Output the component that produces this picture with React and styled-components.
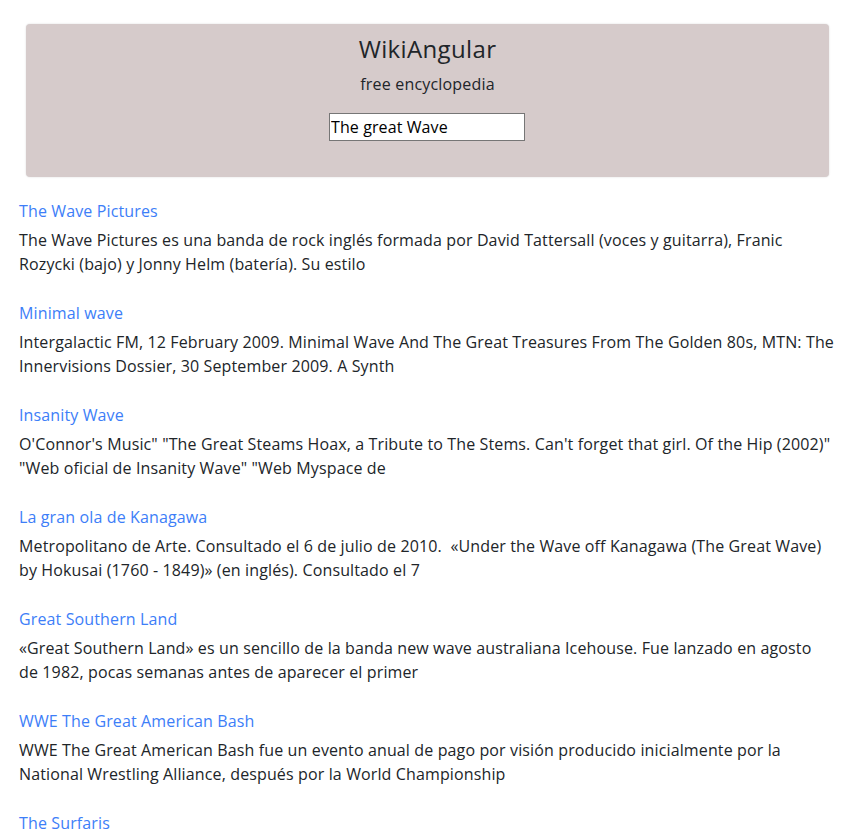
import React from 'react';
import styled, { createGlobalStyle } from 'styled-components';

const GlobalStyle = createGlobalStyle`
  body {
    margin: 0;
    font-family: "Open Sans", "Liberation Sans", sans-serif;
    color: #212529;
    background: #fff;
  }
`;

const Page = styled.div`
  padding: 24px 9px 0 19px;
`;

const Header = styled.header`
  margin: 0 5px 0 7px;
  height: 153px;
  box-sizing: border-box;
  padding-top: 10px;
  background-color: #d6cbcb;
  border-radius: 4px;
  box-shadow: 0 0 2px rgba(0, 0, 0, 0.15);
  display: flex;
  flex-direction: column;
  align-items: center;
`;

const Title = styled.h1`
  margin: 0;
  font-size: 24px;
  font-weight: 400;
  line-height: 30px;
  letter-spacing: 0.35px;
`;

const Subtitle = styled.p`
  margin: 8px 0 0;
  font-size: 16px;
  line-height: 24px;
  letter-spacing: 0.18px;
`;

const SearchInput = styled.input`
  margin-top: 17px;
  margin-right: 1px;
  width: 196px;
  height: 28px;
  box-sizing: border-box;
  padding: 1px 1px;
  font-family: "Open Sans", "Liberation Sans", sans-serif;
  font-size: 16px;
  letter-spacing: 0.1px;
  color: #000;
  border: 1px solid #767676;
  border-radius: 0;
  background: #fff;
  outline: none;
`;

const Results = styled.ul`
  list-style: none;
  margin: 22px 0 0;
  padding: 0;
`;

const Result = styled.li`
  margin-bottom: 25px;
`;

const ResultLink = styled.a`
  display: block;
  font-size: 16px;
  line-height: 24px;
  letter-spacing: 0.13px;
  color: #3d7ef8;
  text-decoration: none;
  margin-bottom: 5px;
`;

const Snippet = styled.p`
  margin: 0;
  font-size: 16px;
  line-height: 24px;
  letter-spacing: 0.13px;
`;

const results = [
  {
    title: 'The Wave Pictures',
    snippet:
      'The Wave Pictures es una banda de rock inglés formada por David Tattersall (voces y guitarra), Franic Rozycki (bajo) y Jonny Helm (batería). Su estilo',
  },
  {
    title: 'Minimal wave',
    snippet:
      'Intergalactic FM, 12 February 2009. Minimal Wave And The Great Treasures From The Golden 80s, MTN: The Innervisions Dossier, 30 September 2009. A Synth',
  },
  {
    title: 'Insanity Wave',
    snippet:
      'O\'Connor\'s Music" "The Great Steams Hoax, a Tribute to The Stems. Can\'t forget that girl. Of the Hip (2002)" "Web oficial de Insanity Wave" "Web Myspace de',
  },
  {
    title: 'La gran ola de Kanagawa',
    snippet:
      'Metropolitano de Arte. Consultado el 6 de julio de 2010. \u00a0«Under the Wave off Kanagawa (The Great Wave) by Hokusai (1760 - 1849)» (en inglés). Consultado el 7',
  },
  {
    title: 'Great Southern Land',
    snippet:
      '«Great Southern Land» es un sencillo de la banda new wave australiana Icehouse. Fue lanzado en agosto de 1982, pocas semanas antes de aparecer el primer',
  },
  {
    title: 'WWE The Great American Bash',
    snippet:
      'WWE The Great American Bash fue un evento anual de pago por visión producido inicialmente por la National Wrestling Alliance, después por la World Championship',
  },
  {
    title: 'The Surfaris',
    snippet:
      'The Surfaris fue una banda estadounidense de surf rock formada en Glendora, California, en 1962. Son conocidos por sus éxitos',
  },
];

export default function App() {
  return (
    <>
      <GlobalStyle />
      <Page>
        <Header>
          <Title>WikiAngular</Title>
          <Subtitle>free encyclopedia</Subtitle>
          <SearchInput type="text" defaultValue="The great Wave" />
        </Header>
        <Results>
          {results.map((r) => (
            <Result key={r.title}>
              <ResultLink href="#">{r.title}</ResultLink>
              <Snippet>{r.snippet}</Snippet>
            </Result>
          ))}
        </Results>
      </Page>
    </>
  );
}
